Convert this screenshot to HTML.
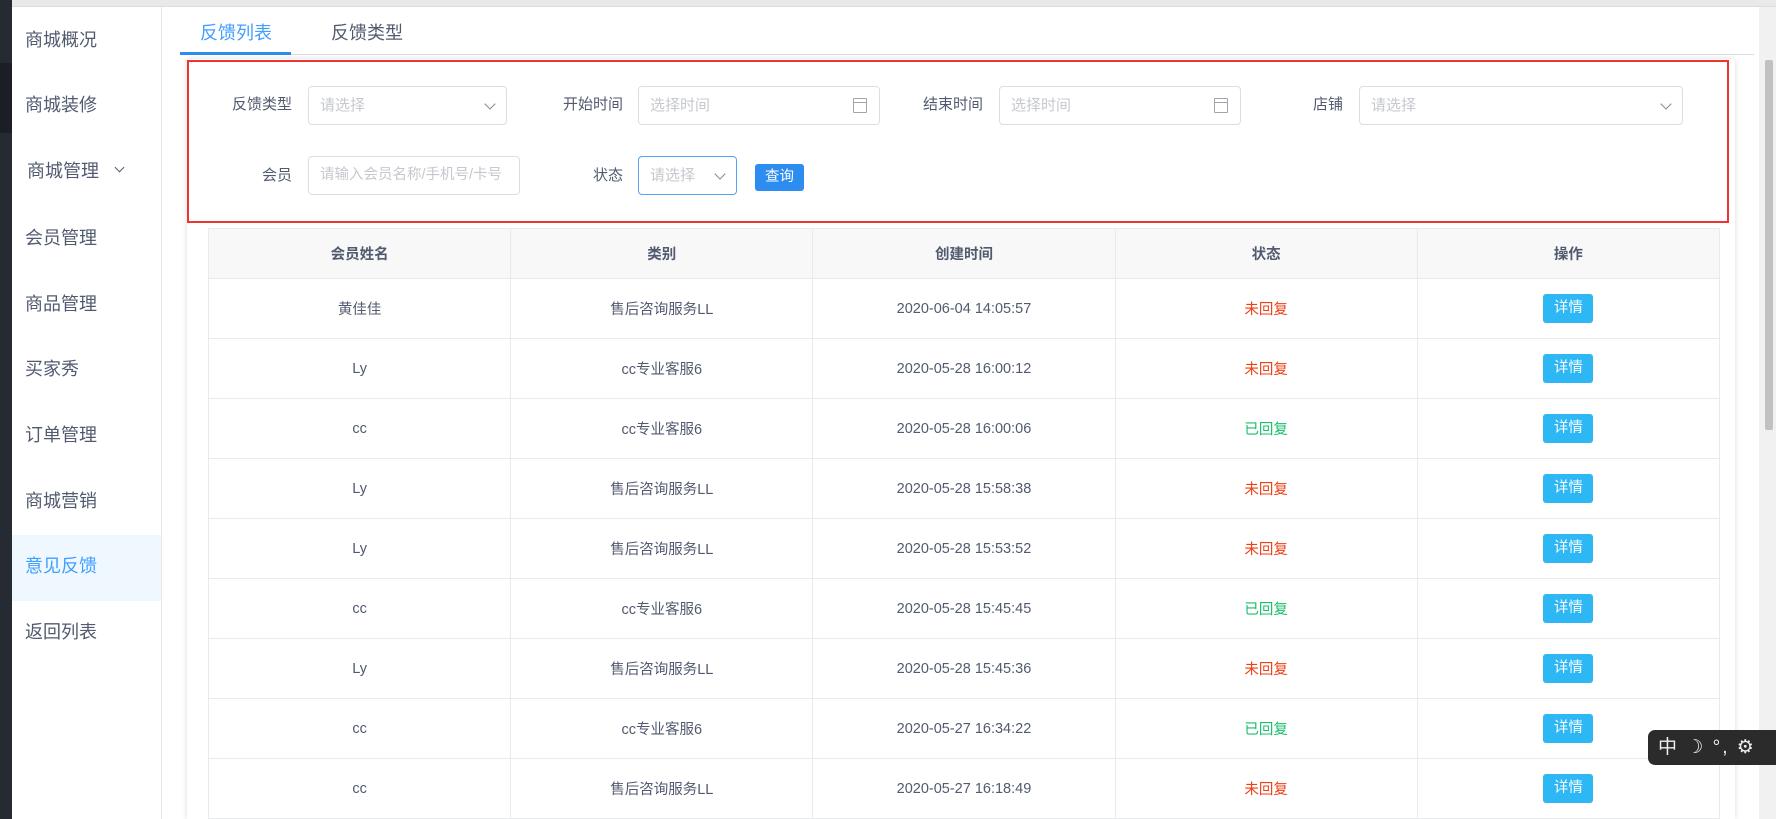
<!DOCTYPE html>
<html style="width:1776px;height:819px;overflow:hidden"><head><meta charset="utf-8"><style>
*{margin:0;padding:0;box-sizing:border-box}
html,body{width:1776px;height:819px;overflow:hidden}
body{background:#fff;font-family:"Liberation Sans","Noto Sans CJK SC",sans-serif;color:#515a6e}
#w{position:relative;width:1776px;height:819px;overflow:hidden}
.a{position:absolute}
.side{left:12px;top:7px;width:150px;height:812px;background:#fff;border-right:1px solid #e6e6e6}
.si{position:absolute;left:13px;font-size:18px;color:#515a6e;line-height:20px}
.lbl{position:absolute;font-size:15px;color:#515a6e;text-align:right;width:80px;line-height:20px}
.inp{position:absolute;height:39px;border:1px solid #dcdee2;border-radius:4px;font-size:15px;color:#c5c8ce;padding-left:11px;line-height:37px}
.chev{position:absolute;right:12px;top:13px;width:8px;height:8px;border-right:1.5px solid #808695;border-bottom:1.5px solid #808695;transform:rotate(45deg)}
.cal{position:absolute;right:12px;top:11px;width:14px;height:15px;border:1.5px solid #a0a4ab;border-radius:1px}
.cal:before{content:"";position:absolute;left:0;right:0;top:3px;border-top:1.5px solid #a0a4ab}
table{border-collapse:collapse;position:absolute;left:208px;top:228px;width:1512px;table-layout:fixed}
td,th{border:1px solid #e8eaec;text-align:center;font-size:14.5px;color:#515a6e;height:60px}
th{background:#f8f8f9;height:50px;font-weight:bold}
.r{color:#ed4014}.g{color:#19be6b}
.b{display:inline-block;background:#2db7f5;color:#fff;border-radius:3px;width:50px;height:29px;line-height:29px;font-size:14.5px}
</style></head><body><div id="w">
<div class="a" style="left:0;top:0;width:1776px;height:7px;background:#e9e9e9;border-bottom:1px solid #ddd"></div>
<div class="a" style="left:0;top:0;width:12px;height:819px;background:#262b33"></div>
<div class="a" style="left:0;top:63px;width:12px;height:70px;background:#1b1f25"></div>
<div class="a side">
<div class="si" style="top:23px">商城概况</div>
<div class="si" style="top:88px">商城装修</div>
<div class="si" style="top:154px;left:15px">商城管理</div>
<div class="a" style="left:104px;top:157px;width:7px;height:7px;border-right:1.5px solid #515a6e;border-bottom:1.5px solid #515a6e;transform:rotate(45deg)"></div>
<div class="si" style="top:221px">会员管理</div>
<div class="si" style="top:287px">商品管理</div>
<div class="si" style="top:352px">买家秀</div>
<div class="si" style="top:418px">订单管理</div>
<div class="si" style="top:484px">商城营销</div>
<div class="a" style="left:0;top:528px;width:149px;height:66px;background:#f0f8ff"></div>
<div class="si" style="top:549px;color:#409eff">意见反馈</div>
<div class="si" style="top:615px">返回列表</div>
</div>
<div class="a" style="left:200px;top:19px;font-size:18px;color:#409eff">反馈列表</div>
<div class="a" style="left:331px;top:19px;font-size:18px;color:#515a6e">反馈类型</div>
<div class="a" style="left:180px;top:54px;width:1574px;border-top:1px solid #dcdee2"></div>
<div class="a" style="left:180px;top:52px;width:111px;height:3px;background:#2d8cf0"></div>
<div class="a" style="left:187px;top:59px;width:1548px;height:760px;background:#fff;box-shadow:0 0 6px rgba(0,0,0,.15);border-radius:4px 4px 0 0"></div>
<div class="a" style="left:187px;top:60px;width:1542px;height:163px;border:2.5px solid #ee3333"></div>
<div class="lbl" style="left:212px;top:95px">反馈类型</div>
<div class="inp" style="left:308px;top:86px;width:199px">请选择<div class="chev"></div></div>
<div class="lbl" style="left:543px;top:95px">开始时间</div>
<div class="inp" style="left:638px;top:86px;width:242px">选择时间<div class="cal"></div></div>
<div class="lbl" style="left:903px;top:95px">结束时间</div>
<div class="inp" style="left:999px;top:86px;width:242px">选择时间<div class="cal"></div></div>
<div class="lbl" style="left:1263px;top:95px">店铺</div>
<div class="inp" style="left:1359px;top:86px;width:324px">请选择<div class="chev"></div></div>
<div class="lbl" style="left:212px;top:166px">会员</div>
<div class="inp" style="left:308px;top:156px;width:212px;font-size:14.5px">请输入会员名称/手机号/卡号</div>
<div class="lbl" style="left:543px;top:166px">状态</div>
<div class="inp" style="left:638px;top:156px;width:99px;border-color:#57a3f3">请选择<div class="chev"></div></div>
<div class="a" style="left:755px;top:164px;width:49px;height:27px;background:#2d8cf0;border-radius:3px;color:#fff;font-size:14.5px;text-align:center;line-height:27px">查询</div>
<table>
<tr><th>会员姓名</th><th>类别</th><th>创建时间</th><th>状态</th><th>操作</th></tr>
<tr><td>黄佳佳</td><td>售后咨询服务LL</td><td>2020-06-04 14:05:57</td><td class="r">未回复</td><td><span class="b">详情</span></td></tr>
<tr><td>Ly</td><td>cc专业客服6</td><td>2020-05-28 16:00:12</td><td class="r">未回复</td><td><span class="b">详情</span></td></tr>
<tr><td>cc</td><td>cc专业客服6</td><td>2020-05-28 16:00:06</td><td class="g">已回复</td><td><span class="b">详情</span></td></tr>
<tr><td>Ly</td><td>售后咨询服务LL</td><td>2020-05-28 15:58:38</td><td class="r">未回复</td><td><span class="b">详情</span></td></tr>
<tr><td>Ly</td><td>售后咨询服务LL</td><td>2020-05-28 15:53:52</td><td class="r">未回复</td><td><span class="b">详情</span></td></tr>
<tr><td>cc</td><td>cc专业客服6</td><td>2020-05-28 15:45:45</td><td class="g">已回复</td><td><span class="b">详情</span></td></tr>
<tr><td>Ly</td><td>售后咨询服务LL</td><td>2020-05-28 15:45:36</td><td class="r">未回复</td><td><span class="b">详情</span></td></tr>
<tr><td>cc</td><td>cc专业客服6</td><td>2020-05-27 16:34:22</td><td class="g">已回复</td><td><span class="b">详情</span></td></tr>
<tr><td>cc</td><td>售后咨询服务LL</td><td>2020-05-27 16:18:49</td><td class="r">未回复</td><td><span class="b">详情</span></td></tr>
</table>
<div class="a" style="left:1759px;top:7px;width:17px;height:812px;background:#f1f1f1"></div>
<div class="a" style="left:1765px;top:60px;width:8px;height:370px;background:#c1c1c1;border-radius:2px"></div>
<div class="a" style="left:1648px;top:730px;width:128px;height:35px;background:#2b2b2b;border-radius:7px 0 0 7px;color:#eee;font-size:19px;line-height:35px;padding-left:10px;letter-spacing:2px">中 ☽ °, ⚙</div>
</div></body></html>
